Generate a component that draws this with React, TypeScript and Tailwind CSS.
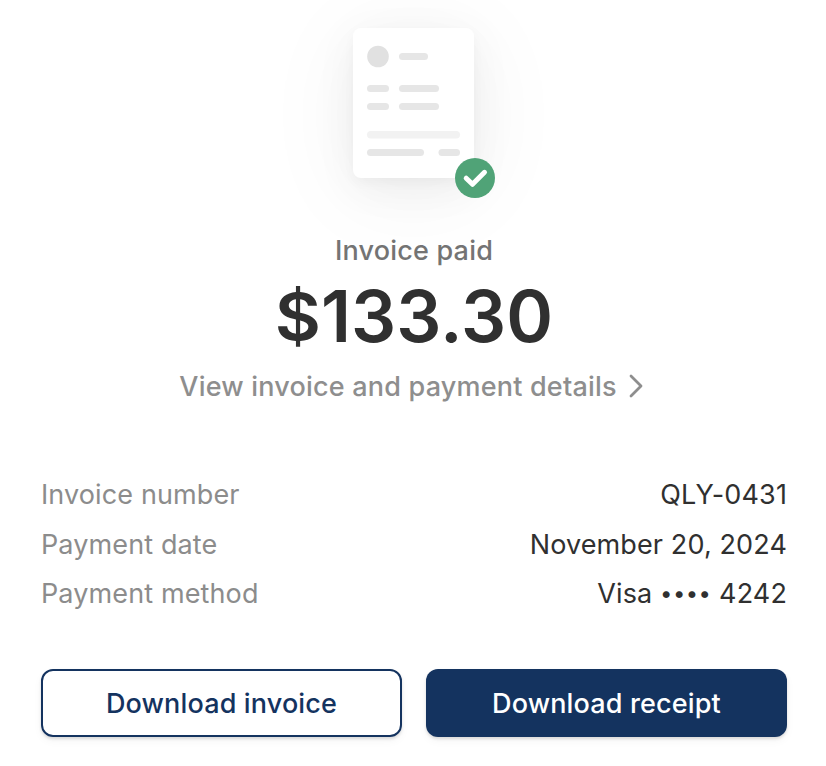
export default function App() {
  const rows = [
    { label: "Invoice number", value: "QLY-0431" },
    { label: "Payment date", value: "November 20, 2024" },
    {
      label: "Payment method",
      value: (
        <>
          Visa <span className="relative -top-[2px] text-[22px] tracking-[0.45px]">••••</span> 4242
        </>
      ),
    },
  ];
  return (
    <main className="flex h-[766px] w-[826px] flex-col items-center bg-white pl-[41px] pr-[39px] pt-7 font-['Inter',sans-serif]">
      <div className="relative mr-[2px] h-[150px] w-[121px] rounded-lg bg-white shadow-[0_5px_12px_rgba(0,0,0,0.03),0_10px_44px_rgba(0,0,0,0.05),0_12px_100px_rgba(0,0,0,0.06)]">
        <svg className="block" width="121" height="150" viewBox="0 0 121 150" fill="#e6e6e6">
          <circle cx="25" cy="28.5" r="10.8" fill="#e1e1e1" />
          <rect x="46" y="25" width="29" height="7" rx="3.5" />
          <rect x="14" y="57" width="22" height="7" rx="3.5" />
          <rect x="46" y="57" width="40" height="7" rx="3.5" />
          <rect x="14" y="75" width="22" height="7" rx="3.5" />
          <rect x="46" y="75" width="40" height="7" rx="3.5" />
          <rect x="14" y="103" width="93" height="7.5" rx="3.75" fill="#f2f2f2" />
          <rect x="14" y="121" width="57" height="7" rx="3.5" />
          <rect x="85.5" y="121" width="21.5" height="7" rx="3.5" />
        </svg>
        <svg className="absolute left-[102px] top-[130px]" width="40" height="40" viewBox="0 0 40 40">
          <circle cx="20" cy="20" r="20" fill="#50a377" />
          <path d="M11.2 20.2l6.3 6.1L29.5 14.3" fill="none" stroke="white" strokeWidth="5" strokeLinecap="round" strokeLinejoin="round" />
        </svg>
      </div>
      <div className="mt-[55px] text-[27px] font-medium leading-9 tracking-[0.2px] text-[#747474]">Invoice paid</div>
      <div className="mt-[3px] text-[71px] font-semibold leading-[88px] tracking-[0.1px] text-[#303030]">
        <span className="inline-block scale-y-[0.91]">$</span>133.30
      </div>
      <a className="mr-[6px] mt-[9px] flex items-center gap-3 text-[27px] font-medium leading-9 tracking-[0.2px] text-[#8e8e8e]">
        View invoice and payment details
        <svg className="relative -top-px" width="14" height="24" viewBox="0 0 14 24" fill="none" stroke="currentColor" strokeWidth="2.8" strokeLinecap="round" strokeLinejoin="round">
          <path d="M2 2l10 10L2 22" />
        </svg>
      </a>
      <dl className="mt-[65px] w-full">
        {rows.map(({ label, value }) => (
          <div key={label} className="flex h-[49.5px] items-center justify-between text-[27px] tracking-[0.12px] even:pt-[2px]">
            <dt className="text-[#8c8c8c]">{label}</dt>
            <dd className="text-[#303030]">{value}</dd>
          </div>
        ))}
      </dl>
      <div className="mt-[50px] grid w-full grid-cols-2 gap-6 text-[27px] font-medium tracking-[0.15px]">
        <button className="h-[68px] rounded-xl border-2 border-[#14335f] pt-[3px] text-[#14335f] shadow-[0_2px_3px_rgba(0,0,0,0.12),0_4px_10px_rgba(0,0,0,0.04)]">Download invoice</button>
        <button className="h-[68px] rounded-xl bg-[#14335f] pt-[3px] text-white shadow-[0_2px_3px_rgba(0,0,0,0.12),0_4px_10px_rgba(0,0,0,0.04)]">Download receipt</button>
      </div>
    </main>
  );
}
